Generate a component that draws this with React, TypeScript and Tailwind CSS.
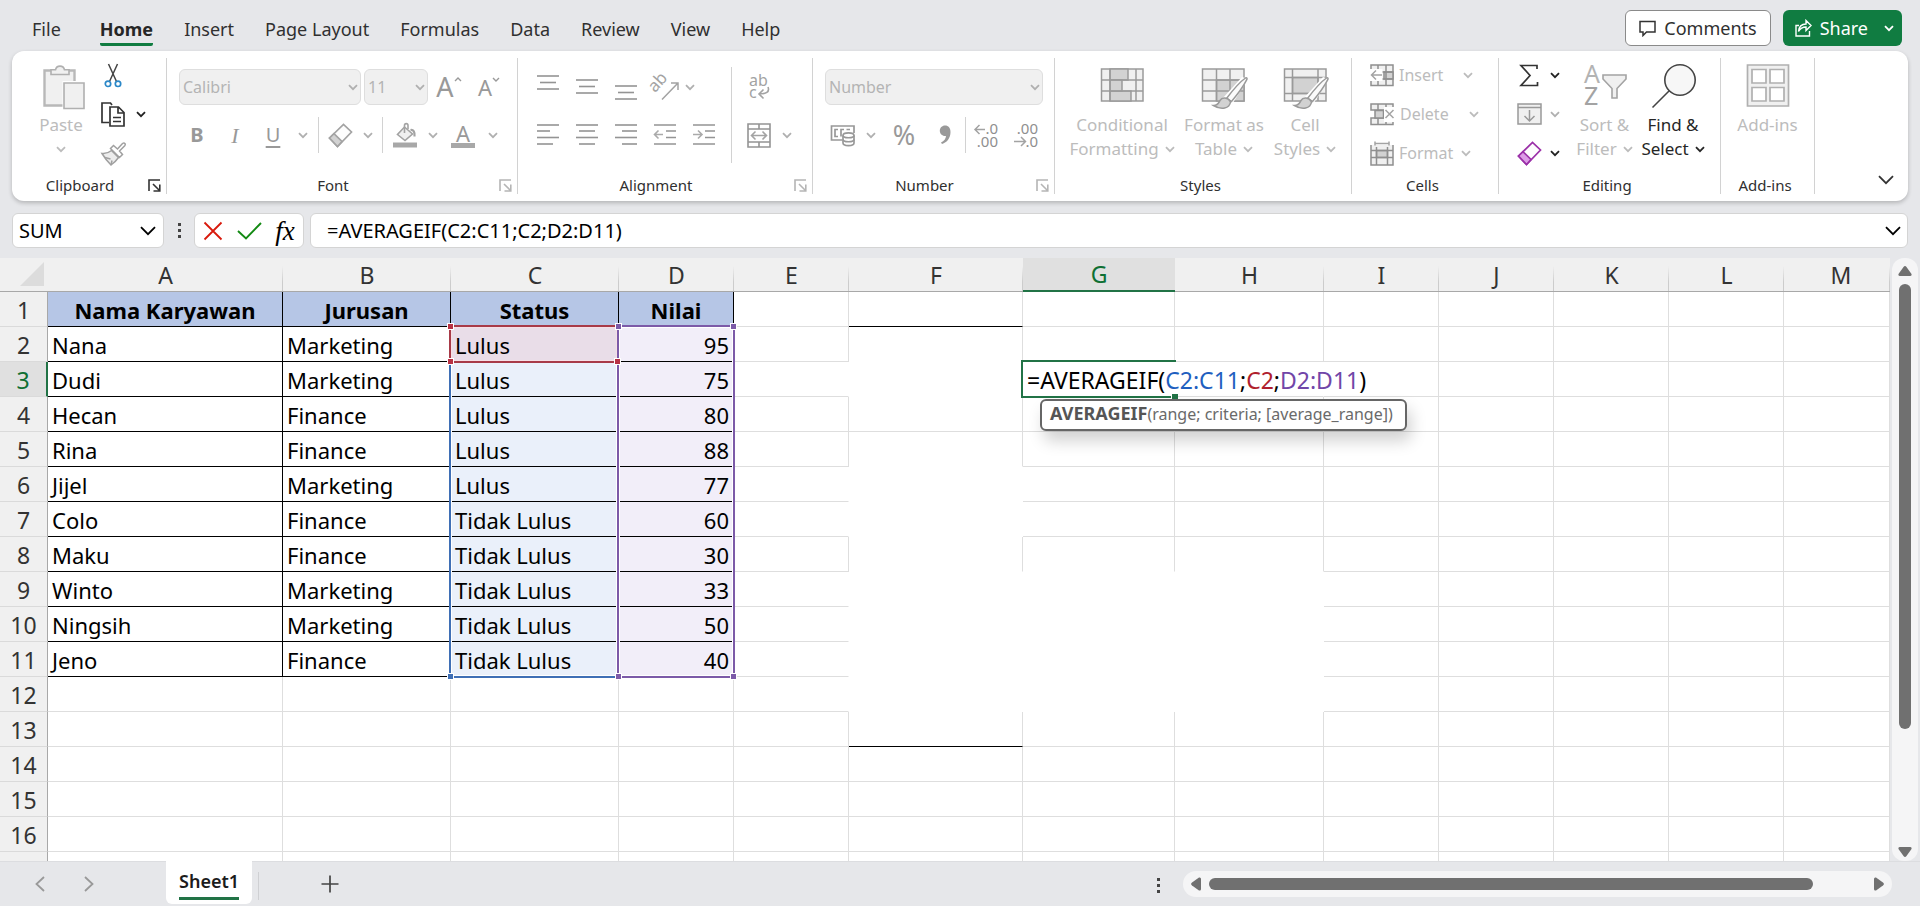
import React from 'react';
import clsx from 'clsx';

const DIM = '#a3a3a3';
const FILL = '#f0f0f0';
const SHADE = '#d2d2d2';

interface IconProps {
  className?: string;
}

interface Employee {
  name: string;
  major: string;
  status: string;
  score: number;
}

const menuTabs = ['File', 'Home', 'Insert', 'Page Layout', 'Formulas', 'Data', 'Review', 'View', 'Help'];

const employees: Employee[] = [
  { name: 'Nana', major: 'Marketing', status: 'Lulus', score: 95 },
  { name: 'Dudi', major: 'Marketing', status: 'Lulus', score: 75 },
  { name: 'Hecan', major: 'Finance', status: 'Lulus', score: 80 },
  { name: 'Rina', major: 'Finance', status: 'Lulus', score: 88 },
  { name: 'Jijel', major: 'Marketing', status: 'Lulus', score: 77 },
  { name: 'Colo', major: 'Finance', status: 'Tidak Lulus', score: 60 },
  { name: 'Maku', major: 'Finance', status: 'Tidak Lulus', score: 30 },
  { name: 'Winto', major: 'Marketing', status: 'Tidak Lulus', score: 33 },
  { name: 'Ningsih', major: 'Marketing', status: 'Tidak Lulus', score: 50 },
  { name: 'Jeno', major: 'Finance', status: 'Tidak Lulus', score: 40 },
];

const columns = [
  { id: 'A', width: 'w-[235px]' },
  { id: 'B', width: 'w-[168px]' },
  { id: 'C', width: 'w-[168px]' },
  { id: 'D', width: 'w-[115px]' },
  { id: 'E', width: 'w-[115px]' },
  { id: 'F', width: 'w-[174px]' },
  { id: 'G', width: 'w-[152px]' },
  { id: 'H', width: 'w-[149px]' },
  { id: 'I', width: 'w-[115px]' },
  { id: 'J', width: 'w-[115px]' },
  { id: 'K', width: 'w-[115px]' },
  { id: 'L', width: 'w-[115px]' },
  { id: 'M', width: '' },
];

const rowNumbers = Array.from({ length: 17 }, (_, i) => i + 1);
const isBetween = (n: number, from: number, to: number) => n >= from && n <= to;

// Rows whose right / bottom gridline is blanked out, per column
const noRightLine: Record<string, number[]> = {
  E: [3, 6, 7, 9, 10, 11, 12],
  F: [3, 6, 7, 9, 10, 11, 12],
  G: [3, 9, 10, 11, 12],
  H: [3, 9, 10, 11, 12],
};
const noBottomLine: Record<string, number[]> = {
  F: [2, 3, 5, 6, 7, 8, 9, 10, 11, 12],
  G: [8, 9, 10, 11, 12],
  H: [8, 9, 10, 11, 12],
};

const rightLine = (col: string, row: number) => {
  if (row <= 11 && 'ABCD'.includes(col)) return 'border-r-black';
  return noRightLine[col]?.includes(row) ? 'border-r-white' : 'border-r-[#dedede]';
};

const bottomLine = (col: string, row: number) => {
  if (row <= 11 && 'ABCD'.includes(col)) return 'border-b-black';
  if (col === 'F' && (row === 1 || row === 13)) return 'border-b-black';
  return noBottomLine[col]?.includes(row) ? 'border-b-white' : 'border-b-[#dedede]';
};

/* ---------- icons ---------- */

const Chevron: React.FC<IconProps> = ({ className }) => (
  <svg className={clsx('shrink-0', className)} width="10" height="7" viewBox="0 0 10 7" fill="none" stroke="currentColor" strokeWidth="1.8">
    <path d="M1 1.2l4 4 4-4" />
  </svg>
);

const WideChevron: React.FC<IconProps> = ({ className }) => (
  <svg className={clsx('shrink-0', className)} width="16" height="10" viewBox="0 0 16 10" fill="none" stroke="currentColor" strokeWidth="1.8">
    <path d="M1 1.2l7 7 7-7" />
  </svg>
);

const IconLauncher: React.FC<IconProps> = ({ className }) => (
  <svg className={className} width="13" height="13" viewBox="0 0 13 13" fill="none" stroke="currentColor" strokeWidth="1.6">
    <path d="M1 12V1h11M5 5l6 6M11.8 5.500v6.500H5.500" />
  </svg>
);

const IconPaste = () => (
  <svg className="overflow-visible" width="48" height="48" viewBox="-2.500 0 48 48" fill={FILL} stroke="#b0b0b0" strokeWidth="1.6">
    <path d="M5 8.500h30v35H5z" strokeWidth="2.400" stroke="#b8b8b8" />
    <path d="M11.500 12.500V7.800H16a4.600 4.600 0 0 1 9 0h4.500v4.700z" />
    <path d="M23 19h24v29H23z" fill="#fff" stroke="none" />
    <path d="M24.500 21h20v25.500h-20z" />
  </svg>
);

const IconCut = () => (
  <svg width="18" height="25" viewBox="0 0 18 25" fill="none">
    <path d="M4.500 1l8 17.500M13.500 1l-8 17.500" stroke="#444" strokeWidth="1.5" />
    <circle cx="4" cy="20.800" r="2.700" stroke="#2b88c8" strokeWidth="1.700" />
    <circle cx="14" cy="20.800" r="2.700" stroke="#2b88c8" strokeWidth="1.700" />
  </svg>
);

const IconCopy = () => (
  <svg width="26" height="26" viewBox="0 0 26 26" fill="none" stroke="#333" strokeWidth="1.7">
    <path d="M9 21.500H2V2h8.500l1.500 2" />
    <path d="M10 6h8.500l5.500 5.500V25H10zM18 6v6h6M13 16.500h8M13 20.500h8" />
  </svg>
);

const IconBrush = () => (
  <svg width="26" height="26" viewBox="0 0 26 26" fill="#ececec" stroke="#a0a0a0" strokeWidth="1.5">
    <path d="M2 13.500c4 .500 7-1 9.500-3l7 7c-2 3-4 5-7.500 7.500C8 22 5 18.500 2 13.500z" />
    <path d="M5 17.500l5.500 1.500M11 25l1-4.500" />
    <path d="M10.500 8.500l3-3 4 3.500 5-5.500c2-1.500 3.500.500 2.200 2.200L19.500 11l3 3.500-3 3z" fill="#fff" />
  </svg>
);

const IconEraser: React.FC<{ stroke: string; tip: string }> = ({ stroke, tip }) => (
  <svg width="25" height="25" viewBox="0 0 25 25" fill="#fdfdfd" stroke={stroke} strokeWidth="1.7">
    <path d="M1.500 15L15.500 1.500l8 7.500L9.500 23.500z" />
    <path d="M1.500 15l4.500-4.300 8 7.800-4.500 5z" fill={tip} />
  </svg>
);

const IconBucket = () => (
  <svg width="26" height="26" viewBox="0 0 26 26" fill="none" stroke={DIM} strokeWidth="1.6">
    <path d="M12.500 5l8 7-7.500 6.500-7.500-6z" fill={FILL} />
    <path d="M12.500 11V3.500c0-2.500 3.500-2.500 3.500 0V7" />
    <path d="M18.500 8c3-.500 4.500 2 4 6.500" strokeWidth="2.200" />
    <path d="M1 20.500h24v5H1z" fill="#a8a8a8" stroke="none" />
  </svg>
);

const IconLines: React.FC<{ lines: [number, number, number][] }> = ({ lines }) => (
  <svg width="24" height="26" viewBox="0 0 24 26" stroke="#949494" strokeWidth="1.6">
    {lines.map(([x1, x2, y]) => (
      <line key={y} x1={x1} x2={x2} y1={y} y2={y} />
    ))}
  </svg>
);

const IconIndent: React.FC<{ arrow: string }> = ({ arrow }) => (
  <svg width="24" height="26" viewBox="0 0 24 26" fill="none" stroke="#949494" strokeWidth="1.6">
    <path d="M1 3h22M13 9h10M13 15.500h10M1 22h22" />
    <path d={arrow} stroke="#aaa" />
  </svg>
);

const IconOrientation = () => (
  <svg className="overflow-visible" width="28" height="28" viewBox="0 0 28 28" fill="none" stroke={DIM} strokeWidth="1.5">
    <text x="3" y="18" transform="rotate(-48 6 18)" fontFamily="Noto Sans" fontSize="17" fill={DIM} stroke="none">ab</text>
    <path d="M11 26.500L26.500 10.500M20 10h7v7" />
  </svg>
);

const IconWrap = () => (
  <svg className="overflow-visible" width="26" height="28" viewBox="0 0 26 28" fill="none" stroke={DIM} strokeWidth="1.6">
    <text x="3" y="13" fontFamily="Noto Sans" fontSize="16" fill={DIM} stroke="none">ab</text>
    <text x="3" y="25" fontFamily="Noto Sans" fontSize="16" fill={DIM} stroke="none">c</text>
    <path d="M22 14c2 5-2 7-9 7M17.500 16.500L13 21l4.500 4.500" />
  </svg>
);

const IconMerge = () => (
  <svg width="24" height="25" viewBox="0 0 24 25" fill="none" stroke="#949494" strokeWidth="1.6">
    <path d="M1 1h22v23H1zM1 6h22M1 19h22M12 1v5M12 19v5" />
    <path d="M4.500 12.500h15M8.500 8.500l-4 4 4 4M15.500 8.500l4 4-4 4" stroke={DIM} />
  </svg>
);

const IconCurrency = () => (
  <svg width="26" height="24" viewBox="0 0 26 24" fill="none" stroke="#989898" strokeWidth="1.7">
    <path d="M12 17H1.500V3h22.500v7" />
    <path d="M8 6.500H5v7h3M14 6.500h-3v7M16.500 6.500H20" />
    <path d="M13 12.500c0-3.500 11-3.500 11 0v7.500c0 3.500-11 3.500-11 0z" fill="#fff" />
    <path d="M13 12.500c0 3 11 3 11 0M13 16.500c0 3 11 3 11 0" />
  </svg>
);

const IconComma = () => (
  <svg width="12" height="20" viewBox="0 0 12 20" fill="#999">
    <path d="M6 .500c3.500 0 5.500 2.500 5.500 6.500 0 6-3.500 10.500-8.500 12l-1-1.500c3-1.500 5-4 5-6.500C3.500 11.500.800 9 .800 5.800.800 2.800 3 .500 6 .500z" />
  </svg>
);

const IconDecimal: React.FC<{ top: string; bottom: string; arrow: string }> = ({ top, bottom, arrow }) => (
  <svg className="overflow-visible" width="26" height="28" viewBox="0 0 26 28" fill="none" stroke={DIM} strokeWidth="1.5">
    <text x="25" y="13" textAnchor="end" fontFamily="Noto Sans" fontSize="15" fill="#8f8f8f" stroke="none">{top}</text>
    <text x="25" y="26" textAnchor="end" fontFamily="Noto Sans" fontSize="15" fill="#8f8f8f" stroke="none">{bottom}</text>
    <path d={arrow} />
  </svg>
);

const IconConditional = () => (
  <svg width="48" height="48" viewBox="0 0 48 48" fill={FILL} stroke="#9a9a9a" strokeWidth="1.5">
    <path d="M3.500 7h41.500v32H3.500z" />
    <path d="M12 7h18v11H12zM12 29h21v10H12z" fill={SHADE} />
    <path d="M12 18h12v11H12z" fill={SHADE} />
    <path d="M3.500 18H45M3.500 29H45M38 7v32M12 7v32" fill="none" />
  </svg>
);

const IconPaintbrush = () => (
  <>
    <path d="M23 36L42 15l6 2-17 27-9 3z" fill="#fff" stroke="none" />
    <path d="M26.500 36.500c6-8 12.500-16 19-20.500 1.500-.500 1.800.500 1.300 1.700C43 25 37.500 32.500 31.500 39.500z" fill="#fbfbfb" />
    <path d="M13.500 43.500c5 0 5-2.500 6.500-5 2-3.500 8-3.500 10.500 1.500-1 6.500-9 8.500-17 3.500z" fill={SHADE} />
  </>
);

const IconFormatTable = () => (
  <svg width="48" height="48" viewBox="0 0 48 48" fill={FILL} stroke="#9a9a9a" strokeWidth="1.5">
    <path d="M2.500 7H44v32H2.500z" />
    <path d="M16.500 18H44v21H16.500z" fill={SHADE} />
    <path d="M2.500 18H44M2.500 29H44M16.500 7v32M30 7v32" fill="none" />
    <IconPaintbrush />
  </svg>
);

const IconCellStyles = () => (
  <svg width="48" height="48" viewBox="0 0 48 48" fill={FILL} stroke="#9a9a9a" strokeWidth="1.5">
    <path d="M3.500 7H45v32H3.500z" />
    <path d="M11.500 15.500H37v16H11.500z" fill={SHADE} />
    <path d="M3.500 15.500H45M3.500 31.500H45M11.500 7v32M37 7v32" fill="none" />
    <IconPaintbrush />
  </svg>
);

const IconInsertCells = () => (
  <svg width="24" height="23" viewBox="0 0 24 23" fill={FILL} stroke="#8f8f8f" strokeWidth="1.5">
    <path d="M1 1h22v20.500H1z" />
    <path d="M14 8h9v7h-9z" fill={SHADE} />
    <path d="M8 1v20.500M16 1v20.500M1 8h22M1 15h22" fill="none" />
    <path d="M0 5h12.500v12H0z" fill="#fff" stroke="none" />
    <path d="M12 11H1.500M6 6.500L1.500 11 6 15.500" fill="none" stroke={DIM} />
  </svg>
);

const IconDeleteCells = () => (
  <svg width="25" height="23" viewBox="0 0 25 23" fill={FILL} stroke="#8f8f8f" strokeWidth="1.5">
    <path d="M23 5V1H1v6h22M23 18v3.500H1V15h22M8 1v6M16 1v6M8 15v6.500M16 15v6.500" />
    <path d="M5 7.500h8.500v7.500H5z" fill={SHADE} />
    <path d="M14 4h11v15H14z" fill="#fff" stroke="none" />
    <path d="M15.500 7l8 8M23.500 7l-8 8" fill="none" stroke={DIM} />
  </svg>
);

const IconFormatCells = () => (
  <svg width="24" height="25" viewBox="0 0 24 25" fill={FILL} stroke="#8f8f8f" strokeWidth="1.5">
    <path d="M1 4v20h22V4" />
    <path d="M6.500 9.500h11v7h-11z" fill={SHADE} />
    <path d="M1 9.500h22M1 16.500h22M6.500 6v18M17.500 6v18" fill="none" />
    <path d="M5 .500v4M19 .500v4M5 2.500h14" fill="none" stroke={DIM} />
  </svg>
);

const IconSum = () => (
  <svg width="20" height="23" viewBox="0 0 20 23" fill="none" stroke="#333" strokeWidth="1.7">
    <path d="M18 5V1.500H2L11 11.500 2 21.500h16.500V18" />
  </svg>
);

const IconFill = () => (
  <svg width="25" height="22" viewBox="0 0 25 22" fill={FILL} stroke="#999" strokeWidth="1.5">
    <path d="M1 1h23v20H1zM1 4.500h23" />
    <path d="M12.500 7v11M7.500 13l5 5 5-5" fill="none" />
  </svg>
);

const IconSortFilter = () => (
  <svg className="overflow-visible" width="48" height="48" viewBox="0 0 48 48" fill={FILL} stroke={DIM} strokeWidth="1.6">
    <text x="3" y="21" fontFamily="Noto Sans" fontSize="25" fill="#b3b3b3" stroke="none">A</text>
    <text x="3" y="43" fontFamily="Noto Sans" fontSize="25" fill={DIM} stroke="none">Z</text>
    <path d="M22 13h23v4l-9 9.500V36h-5v-9.500L22 17z" />
  </svg>
);

const IconFind = () => (
  <svg width="48" height="48" viewBox="0 0 48 48" fill="#f7f7f7" stroke="#444" strokeWidth="1.6">
    <circle cx="31" cy="18" r="15.200" />
    <path d="M20.500 28.500L3.500 45.500" />
  </svg>
);

const IconAddins = () => (
  <svg width="48" height="48" viewBox="0 0 48 48" fill="#fff" stroke="#b0b0b0" strokeWidth="1.7">
    <path d="M3.500 3h41v41h-41z" fill={FILL} />
    <path d="M8 7.500h14v13.500H8zM26 7.500h14v13.500H26zM8 25.500h14V39H8zM26 25.500h14V39H26z" />
  </svg>
);

/* ---------- ribbon building blocks ---------- */

interface ToolProps {
  label: string;
  width: string;
  enabled?: boolean;
  className?: string;
  children: React.ReactNode;
}

const Tool: React.FC<ToolProps> = ({ label, width, enabled = false, className, children }) => (
  <button aria-label={label} disabled={!enabled} className={clsx('flex h-9 shrink-0 items-center justify-center', width, className)}>
    {children}
  </button>
);

const Arrow: React.FC<{ label: string; width: string; enabled?: boolean }> = ({ label, width, enabled }) => (
  <Tool label={label} width={width} enabled={enabled} className={enabled ? 'text-[#222]' : 'text-[#b0b0b0]'}>
    <Chevron />
  </Tool>
);

interface BigToolProps {
  lines: [string, string];
  width: string;
  arrow?: boolean;
  enabled?: boolean;
  children: React.ReactNode;
}

const BigTool: React.FC<BigToolProps> = ({ lines, width, arrow = true, enabled = false, children }) => (
  <button
    disabled={!enabled}
    className={clsx('flex shrink-0 flex-col items-center pt-[5px] text-[17px] leading-6 whitespace-nowrap', width, enabled ? 'text-[#262626]' : 'text-[#bcbcbc]')}
  >
    <span className="pb-[3px]">{children}</span>
    <span>{lines[0]}</span>
    <span className="flex h-6 items-center gap-1.5">
      {lines[1]}
      {arrow && <Chevron />}
    </span>
  </button>
);

interface GroupProps {
  title: string;
  width: string;
  launcher?: 'on' | 'off';
  children: React.ReactNode;
}

const Group: React.FC<GroupProps> = ({ title, width, launcher, children }) => (
  <>
    <section aria-label={title} className={clsx('flex shrink-0 flex-col pt-1.5 pb-1', width)}>
      <div className="flex flex-1">{children}</div>
      <div className="flex h-6 items-center pr-[5px]">
        <span className="flex-1 text-center text-[15px] leading-6 text-[#303030]">{title}</span>
        {launcher && (
          <button aria-label={`${title} settings`} className={launcher === 'on' ? 'text-[#333]' : 'text-[#b5b5b5]'}>
            <IconLauncher />
          </button>
        )}
      </div>
    </section>
    <div className="my-[7px] w-px shrink-0 bg-[#d2d2d2]" />
  </>
);

const RibbonSelect: React.FC<{ label: string; value: string; width: string }> = ({ label, value, width }) => (
  <span className={clsx('relative block shrink-0', width)}>
    <select
      aria-label={label}
      disabled
      className="h-9 w-full appearance-none rounded-md border border-[#dedede] bg-[#f0f0f0] px-[3px] text-base text-[#b4b4b4] opacity-100"
    >
      <option>{value}</option>
    </select>
    <Chevron className="absolute top-[15px] right-[3px] text-[#b0b0b0]" />
  </span>
);

const Separator: React.FC<IconProps> = ({ className }) => <div className={clsx('w-px shrink-0 bg-[#d2d2d2]', className)} />;

const Ribbon = () => (
  <div className="mx-3 flex h-[150px] rounded-xl bg-white shadow-[0_2px_4px_rgba(0,0,0,0.22)]">
    <Group title="Clipboard" width="w-[154px]" launcher="on">
      <div className="flex pl-5">
        <BigTool lines={['Paste', '']} width="w-[58px]">
          <IconPaste />
        </BigTool>
        <div className="flex flex-col gap-[3px]">
          <Tool label="Cut" width="w-[46px]" enabled><IconCut /></Tool>
          <div className="flex">
            <Tool label="Copy" width="w-[46px]" enabled><IconCopy /></Tool>
            <Arrow label="Copy options" width="w-2.5" enabled />
          </div>
          <Tool label="Format Painter" width="w-[46px]"><IconBrush /></Tool>
        </div>
      </div>
    </Group>

    <Group title="Font" width="w-[350px]" launcher="off">
      <div className="flex flex-col gap-3 pt-3 pl-3 text-[#999]">
        <div className="flex">
          <RibbonSelect label="Font" value="Calibri" width="w-[182px]" />
          <span className="ml-[3px]"><RibbonSelect label="Font size" value="11" width="w-16" /></span>
          <Tool label="Increase font size" width="w-[42px]" className="text-[27px] leading-9">
            A
            <svg className="mb-4 shrink-0" width="8" height="5" viewBox="0 0 8 5" fill="none" stroke="currentColor" strokeWidth="1.4">
              <path d="M1 4l3-3 3 3" />
            </svg>
          </Tool>
          <Tool label="Decrease font size" width="w-[38px]" className="text-[22px] leading-9">
            A
            <svg className="mb-4 shrink-0" width="8" height="5" viewBox="0 0 8 5" fill="none" stroke="currentColor" strokeWidth="1.4">
              <path d="M1 1l3 3 3-3" />
            </svg>
          </Tool>
        </div>
        <div className="flex">
          <Tool label="Bold" width="w-9" className="text-xl font-bold">B</Tool>
          <Tool label="Italic" width="w-10" className="font-['Liberation_Serif'] text-[22px] italic">I</Tool>
          <Tool label="Underline" width="w-9" className="text-xl underline decoration-2 underline-offset-4">U</Tool>
          <Arrow label="Underline options" width="w-6" />
          <Separator className="mx-[3px] h-9" />
          <Tool label="Clear formats" width="w-9"><IconEraser stroke={DIM} tip={SHADE} /></Tool>
          <Arrow label="Clear options" width="w-5" />
          <Separator className="mx-1 h-9" />
          <Tool label="Fill color" width="w-9"><IconBucket /></Tool>
          <Arrow label="Fill color options" width="w-5" />
          <Tool label="Font color" width="w-10">
            <span className="flex w-6 flex-col items-center border-b-[5px] border-[#a8a8a8] text-[22px] leading-5">A</span>
          </Tool>
          <Arrow label="Font color options" width="w-5" />
        </div>
      </div>
    </Group>

    <Group title="Alignment" width="w-[294px]" launcher="off">
      <div className="flex flex-col gap-3 pt-3 pl-2.5">
        <div className="flex">
          <Tool label="Top align" width="w-[39px]"><IconLines lines={[[1, 23, 2], [4, 20, 8.5], [1, 23, 15]]} /></Tool>
          <Tool label="Middle align" width="w-[39px]"><IconLines lines={[[1, 23, 6], [4, 20, 12.5], [1, 23, 19]]} /></Tool>
          <Tool label="Bottom align" width="w-[39px]"><IconLines lines={[[1, 23, 12], [4, 20, 18.5], [1, 23, 25]]} /></Tool>
          <Tool label="Orientation" width="w-[39px]"><IconOrientation /></Tool>
          <Arrow label="Orientation options" width="w-3" />
        </div>
        <div className="flex">
          <Tool label="Align left" width="w-[39px]"><IconLines lines={[[1, 23, 3], [1, 14, 9], [1, 23, 15.5], [1, 17, 22]]} /></Tool>
          <Tool label="Center" width="w-[39px]"><IconLines lines={[[1, 23, 3], [4, 20, 9], [1, 23, 15.5], [4, 20, 22]]} /></Tool>
          <Tool label="Align right" width="w-[39px]"><IconLines lines={[[1, 23, 3], [8, 23, 9], [1, 23, 15.5], [8, 23, 22]]} /></Tool>
          <Tool label="Decrease indent" width="w-[39px]"><IconIndent arrow="M10 12.500H2M5.500 8.500l-4 4 4 4" /></Tool>
          <Tool label="Increase indent" width="w-[39px]"><IconIndent arrow="M1 12.500h8.500M6 8.500l4 4-4 4" /></Tool>
        </div>
      </div>
      <Separator className="mt-2.5 ml-2 h-24" />
      <div className="flex flex-col gap-3 pt-3 pl-[7px]">
        <Tool label="Wrap text" width="w-[39px]"><IconWrap /></Tool>
        <div className="flex">
          <Tool label="Merge cells" width="w-[39px]"><IconMerge /></Tool>
          <Arrow label="Merge options" width="w-[18px]" />
        </div>
      </div>
    </Group>

    <Group title="Number" width="w-[241px]" launcher="off">
      <div className="flex flex-col gap-3 pt-3 pl-3">
        <RibbonSelect label="Number format" value="Number" width="w-[218px]" />
        <div className="flex text-[#999]">
          <Tool label="Accounting format" width="w-9"><IconCurrency /></Tool>
          <Arrow label="Accounting options" width="w-5" />
          <Tool label="Percent style" width="w-[46px]" className="text-[27px]">%</Tool>
          <Tool label="Comma style" width="w-9"><IconComma /></Tool>
          <Separator className="ml-0.5 h-9" />
          <Tool label="Increase decimal" width="w-10">
            <IconDecimal top=".0" bottom=".00" arrow="M12 8.500H2.500M6.500 4L2 8.500 6.500 13" />
          </Tool>
          <Tool label="Decrease decimal" width="w-10">
            <IconDecimal top=".00" bottom=".0" arrow="M1 20.500h11M8 16l4.500 4.500L8 25" />
          </Tool>
        </div>
      </div>
    </Group>

    <Group title="Styles" width="w-[296px]">
      <div className="flex pl-3.5">
        <BigTool lines={['Conditional', 'Formatting']} width="w-[106px]"><IconConditional /></BigTool>
        <BigTool lines={['Format as', 'Table']} width="w-[98px]"><IconFormatTable /></BigTool>
        <BigTool lines={['Cell', 'Styles']} width="w-[64px]"><IconCellStyles /></BigTool>
      </div>
    </Group>

    <Group title="Cells" width="w-[146px]">
      <div className="flex flex-col gap-[3px] pl-[18px] text-base text-[#bcbcbc]">
        <button disabled className="flex h-9 items-center">
          <IconInsertCells /><span className="ml-[5px]">Insert</span><Chevron className="ml-5" />
        </button>
        <button disabled className="flex h-9 items-center">
          <IconDeleteCells /><span className="ml-[5px]">Delete</span><Chevron className="ml-5" />
        </button>
        <button disabled className="flex h-9 items-center">
          <IconFormatCells /><span className="ml-[5px]">Format</span><Chevron className="ml-2" />
        </button>
      </div>
    </Group>

    <Group title="Editing" width="w-[221px]">
      <div className="flex pl-4">
        <div className="flex flex-col gap-[3px]">
          <div className="flex">
            <Tool label="AutoSum" width="w-7" enabled><IconSum /></Tool>
            <Arrow label="AutoSum options" width="w-6" enabled />
          </div>
          <div className="flex">
            <Tool label="Fill" width="w-7"><IconFill /></Tool>
            <Arrow label="Fill options" width="w-6" />
          </div>
          <div className="flex">
            <Tool label="Clear" width="w-7" enabled><IconEraser stroke="#9b30a8" tip="#dc9ce6" /></Tool>
            <Arrow label="Clear options" width="w-6" enabled />
          </div>
        </div>
        <BigTool lines={['Sort &', 'Filter']} width="w-[75px]"><IconSortFilter /></BigTool>
        <BigTool lines={['Find &', 'Select']} width="w-[62px]" enabled><IconFind /></BigTool>
      </div>
    </Group>

    <Group title="Add-ins" width="w-[93px]">
      <div className="flex flex-1 justify-center">
        <BigTool lines={['Add-ins', '']} width="w-[70px]" arrow={false}><IconAddins /></BigTool>
      </div>
    </Group>

    <button aria-label="Collapse ribbon" className="mr-3.5 mb-4 ml-auto self-end text-[#333]">
      <WideChevron />
    </button>
  </div>
);

const MenuBar = () => (
  <header className="flex h-[51px] items-start justify-between pt-2.5 pr-[18px] pl-8 text-lg text-[#303030]">
    <nav className="flex gap-[31px]">
      {menuTabs.map((tab) => (
        <button
          key={tab}
          className={clsx(
            'h-9 leading-[38px] whitespace-nowrap',
            tab === 'File' && 'mr-2',
            tab === 'Home' && 'rounded-b-xs border-b-[3px] border-[#107c41] font-bold text-[#262626]',
          )}
        >
          {tab}
        </button>
      ))}
    </nav>
    <div className="flex gap-3">
      <button className="flex h-9 items-center gap-2 rounded-md border border-[#8a8a8a] bg-white px-[13px]">
        <svg width="17" height="17" viewBox="0 0 17 17" fill="none" stroke="#333" strokeWidth="1.5">
          <path d="M1 1.500h15V12H7.500L4 15.500V12H1z" />
        </svg>
        Comments
      </button>
      <button className="flex h-9 items-center rounded-md bg-[#107c41] pr-2 pl-3 text-white">
        <svg className="mr-2" width="17" height="18" viewBox="0 0 17 18" fill="none" stroke="currentColor" strokeWidth="1.4">
          <path d="M4 6.500H1V17h13.500v-5" />
          <path d="M3.500 12.500C4 7.500 7 5 11 5V1.500l5 5-5 5V8C8 8 5.500 9 3.500 12.500z" />
        </svg>
        Share
        <Chevron className="ml-4" />
      </button>
    </div>
  </header>
);

const FormulaBar = () => (
  <div className="mt-3 mb-2.5 flex px-3 text-black">
    <div className="flex h-[35px] w-[152px] items-center rounded-md border border-[#d4d4d4] bg-white pr-[7px] pl-1.5">
      <input aria-label="Name box" readOnly value="SUM" className="w-full min-w-0 flex-1 bg-transparent text-xl leading-8 outline-none" />
      <button aria-label="Names"><WideChevron /></button>
    </div>
    <div className="flex w-[30px] flex-col items-center justify-center gap-[3px]">
      <span className="size-[3px] bg-[#444]" />
      <span className="size-[3px] bg-[#444]" />
      <span className="size-[3px] bg-[#444]" />
    </div>
    <div className="flex h-[35px] items-center rounded-md border border-[#d4d4d4] bg-white">
      <button aria-label="Cancel" className="flex w-9 justify-center">
        <svg width="20" height="20" viewBox="0 0 20 20" fill="none" stroke="#d8190b" strokeWidth="1.8">
          <path d="M1.500 1.500l17 17M18.500 1.500l-17 17" />
        </svg>
      </button>
      <button aria-label="Enter" className="flex w-9 justify-center">
        <svg width="25" height="18" viewBox="0 0 25 18" fill="none" stroke="#138a13" strokeWidth="1.9">
          <path d="M1 9l8 7.500L24 1" />
        </svg>
      </button>
      <button aria-label="Insert function" className="flex w-9 justify-center font-['Liberation_Serif'] text-[27px] leading-8 italic">
        fx
      </button>
    </div>
    <div className="ml-1.5 flex h-[35px] min-w-0 flex-1 items-center rounded-md border border-[#d4d4d4] bg-white pr-1.5 pl-4">
      <input
        aria-label="Formula bar"
        readOnly
        value="=AVERAGEIF(C2:C11;C2;D2:D11)"
        className="min-w-0 flex-1 bg-transparent text-xl leading-8 outline-none"
      />
      <button aria-label="Expand formula bar"><WideChevron /></button>
    </div>
  </div>
);

/* ---------- sheet ---------- */

const Handle: React.FC<{ className: string }> = ({ className }) => (
  <span className={clsx('absolute size-[7px] border border-white', className)} />
);

// Outlines of the ranges used by the formula, anchored to C2 and D2
const StatusRange = () => (
  <>
    <span className="pointer-events-none absolute -top-0.5 -right-px -left-0.5 block h-[353px] border-2 border-[#3f6fb5] shadow-[inset_0_0_0_1px_white]">
      <Handle className="-bottom-1 -left-1 bg-[#3f6fb5]" />
    </span>
    <span className="pointer-events-none absolute -top-0.5 -right-px -bottom-0.5 -left-0.5 block border-2 border-[#a83a48] shadow-[inset_0_0_0_1px_#f6dfe5]">
      <Handle className="-top-1 -left-1 bg-[#b83244]" />
      <Handle className="-bottom-1 -left-1 bg-[#b83244]" />
      <Handle className="-right-1 -bottom-1 z-10 bg-[#b83244]" />
    </span>
  </>
);

const ScoreRange = () => (
  <span className="pointer-events-none absolute -inset-x-0.5 -top-0.5 block h-[353px] border-2 border-[#7c5aa8] shadow-[inset_0_0_0_1px_white]">
    <Handle className="-top-1 -left-1 bg-[#7c5aa8]" />
    <Handle className="-top-1 -right-1 bg-[#7c5aa8]" />
    <Handle className="-bottom-1 -left-1 bg-[#7c5aa8]" />
    <Handle className="-right-1 -bottom-1 bg-[#7c5aa8]" />
  </span>
);

const CellEditor = () => (
  <>
    <span className="absolute -inset-y-0.5 -right-0.5 -left-0.5 block border-y-2 border-l-2 border-[#217346]">
      <span className="absolute -right-0.5 -bottom-1 block size-[7px] border-t border-l border-white bg-[#217346]" />
    </span>
    <span className="relative block text-[23px] whitespace-nowrap">
      =AVERAGEIF(<span className="text-[#1f5fbf]">C2:C11</span>;<span className="text-[#b01e2d]">C2</span>;
      <span className="text-[#7146a8]">D2:D11</span>)
    </span>
    <span className="absolute top-[37px] left-[17px] z-10 block rounded-md border-2 border-[#666] bg-white pr-3 pb-[3px] pl-2 text-base leading-6 whitespace-nowrap text-[#6a6a6a] shadow-[4px_10px_16px_rgba(0,0,0,0.18)]">
      <b className="text-lg leading-6 text-[#555]">AVERAGEIF</b>(range; criteria; [average_range])
    </span>
  </>
);

const cellContent = (col: string, row: number): React.ReactNode => {
  if (col === 'G' && row === 3) return <CellEditor />;
  const employee = employees[row - 2];
  if (!employee) return null;
  if (col === 'A') return employee.name;
  if (col === 'B') return employee.major;
  if (col === 'C') return <>{employee.status}{row === 2 && <StatusRange />}</>;
  if (col === 'D') return <>{employee.score}{row === 2 && <ScoreRange />}</>;
  return null;
};

const titles: Record<string, string> = { A: 'Nama Karyawan', B: 'Jurusan', C: 'Status', D: 'Nilai' };

const Sheet = () => (
  <table className="w-full table-fixed border-separate border-spacing-0 text-[22px] leading-8 text-black">
    <colgroup>
      <col className="w-12" />
      {columns.map((c) => (
        <col key={c.id} className={c.width} />
      ))}
    </colgroup>
    <thead>
      <tr className="text-[23px] text-[#333]">
        <th className="border-b border-[#a8a8a8] bg-[#f0f0f0] p-0">
          <svg className="ml-5" width="24" height="25" viewBox="0 0 24 25" fill="#dcdcdc">
            <path d="M24 0v24H0z" />
          </svg>
        </th>
        {columns.map((c) => (
          <th
            key={c.id}
            scope="col"
            className={clsx(
              'p-0 font-normal',
              c.id === 'M' && 'pl-2',
              c.id === 'G'
                ? 'border-b-2 border-[#217346] bg-[#e0e0e0] leading-8 text-[#0f7034]'
                : 'border-b border-[#a8a8a8] bg-[#f0f0f0] bg-[linear-gradient(to_bottom,transparent_8px,#cccccc_24px)] bg-[length:1px_100%] bg-right bg-no-repeat pt-px leading-8',
            )}
          >
            {c.id}
          </th>
        ))}
      </tr>
    </thead>
    <tbody>
      {rowNumbers.map((row) => (
        <tr key={row} className="h-[35px]">
          <th
            scope="row"
            className={clsx(
              'border-b border-b-[#dadada] p-0 pt-0.5 text-[23px] font-normal',
              row === 3 ? 'border-r-2 border-r-[#217346] bg-[#e0e0e0] text-[#0f7034]' : 'border-r border-r-[#a8a8a8] bg-[#f0f0f0] text-[#333]',
            )}
          >
            {row < 17 && row}
          </th>
          {columns.map(({ id }) => (
            <td
              key={id}
              className={clsx(
                'border-r border-b px-1 pt-0.5 pb-0 whitespace-nowrap',
                rightLine(id, row),
                bottomLine(id, row),
                ((row === 2 && (id === 'C' || id === 'D')) || (row === 3 && id === 'G')) && 'relative',
                row === 1 && titles[id] && 'bg-[#b6c6e6] text-center font-bold',
                id === 'C' && row === 2 && 'bg-[#e9dde8]',
                id === 'C' && isBetween(row, 3, 11) && 'bg-[#eaf0fa]',
                id === 'D' && isBetween(row, 2, 11) && 'bg-[#f2eef9] text-right',
              )}
            >
              {row === 1 ? titles[id] : cellContent(id, row)}
            </td>
          ))}
        </tr>
      ))}
    </tbody>
  </table>
);

const VerticalScroll = () => (
  <div className="w-[30px] shrink-0 px-0.5">
    <div className="flex h-full flex-col items-center rounded-xl bg-[#f5f5f6] pt-2 pb-1">
      <svg width="14" height="10" viewBox="0 0 14 10" fill="#707070">
        <path d="M5.500 1q1.500-1.800 3 0L13.500 8q.500 2-1.500 2H2Q0 10 .500 8z" />
      </svg>
      <div className="mt-2 flex w-3 flex-1 flex-col">
        <div className="h-[79%] rounded-full bg-[#707070]" />
      </div>
      <svg width="14" height="10" viewBox="0 0 14 10" fill="#707070">
        <path d="M5.500 9q1.500 1.800 3 0L13.500 2q.500-2-1.500-2H2Q0 0 .500 2z" />
      </svg>
    </div>
  </div>
);

const SheetBar = () => (
  <footer className="flex h-[45px] shrink-0 border-t border-[#dcdde0] pr-7">
    <div className="flex w-[166px] items-center gap-[39px] pl-[35px] text-[#999]">
      <button aria-label="Previous sheet">
        <svg width="10" height="16" viewBox="0 0 10 16" fill="none" stroke="currentColor" strokeWidth="1.8"><path d="M9 1L1.500 8 9 15" /></svg>
      </button>
      <button aria-label="Next sheet">
        <svg width="10" height="16" viewBox="0 0 10 16" fill="none" stroke="currentColor" strokeWidth="1.8"><path d="M1 1l7.500 7L1 15" /></svg>
      </button>
    </div>
    <button className="-mt-px flex h-[43px] items-start rounded-b-md bg-white px-[13px] pt-1 text-lg font-semibold text-[#1c1c1c]">
      <span className="border-b-[3px] border-[#217346] leading-8">Sheet1</span>
    </button>
    <div className="mt-2.5 ml-1.5 h-7 w-px bg-[#cfd0d3]" />
    <button aria-label="New sheet" className="ml-[62px]">
      <svg width="18" height="18" viewBox="0 0 18 18" fill="none" stroke="#444" strokeWidth="1.7"><path d="M9 .500v17M.500 9h17" /></svg>
    </button>
    <div className="ml-auto flex w-[26px] flex-col items-start justify-center gap-[3px] pt-0.5">
      <span className="size-[3px] bg-[#444]" />
      <span className="size-[3px] bg-[#444]" />
      <span className="size-[3px] bg-[#444]" />
    </div>
    <div className="mt-[9px] flex h-[26px] w-3/8 items-center rounded-full bg-[#f5f5f6] px-2">
      <svg width="10" height="14" viewBox="0 0 10 14" fill="#707070"><path d="M1 5.500q-1.800 1.500 0 3L8 13.500q2 .500 2-1.500V2Q10 0 8 .500z" /></svg>
      <div className="mx-2 flex h-3 flex-1">
        <div className="w-[92%] rounded-full bg-[#707070]" />
      </div>
      <svg width="10" height="14" viewBox="0 0 10 14" fill="#707070"><path d="M9 5.500q1.800 1.500 0 3L2 13.500Q0 14 0 12V2Q0 0 2 .500z" /></svg>
    </div>
  </footer>
);

export default function App() {
  return (
    <div className="flex h-screen flex-col overflow-hidden bg-[#e6e7ea] font-['Noto_Sans',sans-serif]">
      <MenuBar />
      <Ribbon />
      <FormulaBar />
      <main className="flex min-h-0 flex-1">
        <div className="min-w-0 flex-1 overflow-hidden bg-white">
          <Sheet />
        </div>
        <VerticalScroll />
      </main>
      <SheetBar />
    </div>
  );
}
